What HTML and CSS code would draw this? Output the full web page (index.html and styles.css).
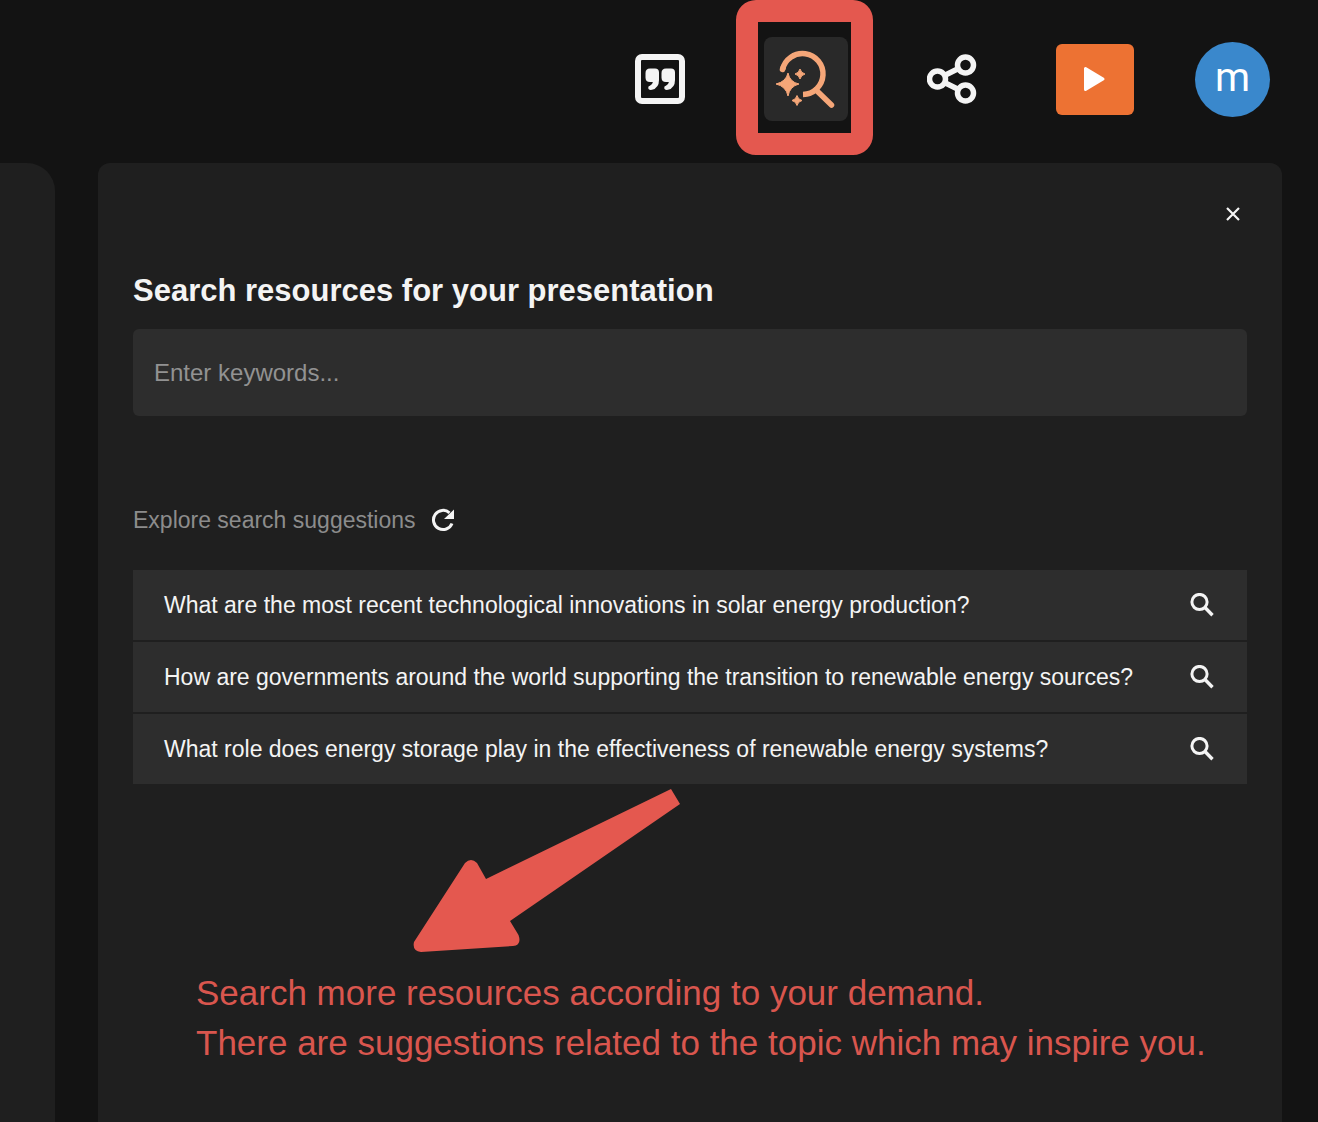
FILE: index.html
```html
<!DOCTYPE html>
<html lang="en">
<head>
<meta charset="utf-8">
<meta name="viewport" content="width=device-width, initial-scale=1">
<title>Search resources</title>
<link rel="stylesheet" href="styles.css">
</head>
<body>
<svg class="sprite" aria-hidden="true">
  <symbol id="icon-search" viewBox="0 0 24 24">
    <circle cx="9.500" cy="9" r="7.600" fill="none" stroke="currentColor" stroke-width="3"/>
    <path d="M14.500 14 22.500 22.200" fill="none" stroke="currentColor" stroke-width="3.400"/>
  </symbol>
</svg>
<header class="topbar">
  <button class="tool" type="button" aria-label="Citations">
    <svg class="tool-icon" viewBox="0 0 50 50" aria-hidden="true">
      <rect x="3" y="3" width="44" height="44" rx="4" fill="none" stroke="currentColor" stroke-width="6"/>
      <path id="quote" d="M15 14.500h5q4 0 4 4v7.500q0 8-7 9.800-3.300.6-3.800-1.500-.4-2 2-2.800 2.200-.9 2.700-3.500H15q-4.500 0-4.500-4.500v-4.500q0-4.500 4.500-4.500z" fill="currentColor"/>
      <use href="#quote" x="16"/>
    </svg>
  </button>
  <button class="tool tool-active" type="button" aria-label="Search resources">
    <svg class="spark-icon" viewBox="0 0 60 60" aria-hidden="true">
      <g fill="none" stroke="currentColor" stroke-width="5.500">
        <path d="M6.500 20.500A20.500 20.500 0 1 1 27 45.500" stroke-linecap="butt"/>
        <path d="M6.500 20.500 7.200 18.500" stroke-linecap="round"/>
        <path d="M40 41 55.500 56" stroke-linecap="round"/>
      </g>
      <g fill="currentColor" stroke="currentColor" stroke-width="1">
        <path d="M12 24q1.800 9.200 11 11-9.200 2.300-11 12-2-9.700-12-12 10-2.300 12-11z"/>
        <path d="M24 20q1 4 5 5-4 1-5 5-1-4-5-5 4-1 5-5z"/>
        <path d="M21 46.500q1 4 5 5-4 1-5 5-1-4-5-5 4-1 5-5z"/>
      </g>
    </svg>
    <span class="highlight"></span>
  </button>
  <button class="tool" type="button" aria-label="Share">
    <svg class="tool-icon" viewBox="0 0 50 50" aria-hidden="true">
      <g fill="none" stroke="currentColor" stroke-width="5.500">
        <circle cx="10.500" cy="25" r="8"/>
        <circle cx="38.500" cy="11" r="8"/>
        <circle cx="38.500" cy="39" r="8"/>
        <path d="M17.500 21.500 31.500 14.500M17.500 28.500 31.500 35.500"/>
      </g>
    </svg>
  </button>
  <button class="play" type="button" aria-label="Present">
    <svg class="play-icon" viewBox="0 0 24 26" aria-hidden="true">
      <path d="M2.500 2.500v21L20 13z" fill="currentColor" stroke="currentColor" stroke-width="3" stroke-linejoin="round"/>
    </svg>
  </button>
  <button class="avatar" type="button" aria-label="Account">m</button>
</header>
<main class="workspace">
  <div class="canvas"></div>
  <section class="panel">
    <button class="close" type="button" aria-label="Close">
      <svg class="close-icon" viewBox="0 0 14 14" aria-hidden="true"><path d="M1 1 13 13M13 1 1 13" fill="none" stroke="currentColor" stroke-width="2.200"/></svg>
    </button>
    <label class="title" for="keywords">Search resources for your presentation</label>
    <input class="field" id="keywords" type="text" placeholder="Enter keywords...">
    <div class="explore">
      <span>Explore search suggestions</span>
      <button class="refresh" type="button" aria-label="Refresh suggestions">
        <svg class="refresh-icon" viewBox="0 0 24 24" aria-hidden="true">
          <path d="M18.500 4.800A9.600 9.600 0 1 0 21 15.500" fill="none" stroke="currentColor" stroke-width="3"/>
          <path d="M23 1.500V11H13z" fill="currentColor"/>
        </svg>
      </button>
    </div>
    <div class="suggestions">
      <button class="suggestion" type="button">What are the most recent technological innovations in solar energy production?<svg class="search-icon" aria-hidden="true"><use href="#icon-search"/></svg></button>
      <button class="suggestion" type="button">How are governments around the world supporting the transition to renewable energy sources?<svg class="search-icon" aria-hidden="true"><use href="#icon-search"/></svg></button>
      <button class="suggestion" type="button">What role does energy storage play in the effectiveness of renewable energy systems?<svg class="search-icon" aria-hidden="true"><use href="#icon-search"/></svg></button>
    </div>
    <div class="note">
      <svg class="arrow" viewBox="0 0 268 164" aria-hidden="true">
        <path d="M258 0 267 15 97 132 105.500 146Q109 156 100 157L8 163Q-1 162 1 153L52 74Q58 68 64 74L73 90z" fill="currentColor"/>
      </svg>
      <p class="note-text">Search more resources according to your demand.<br>There are suggestions related to the topic which may inspire you.</p>
    </div>
  </section>
</main>
</body>
</html>
```

FILE: styles.css
```css
* {
  box-sizing: border-box;
}

body {
  margin: 0;
  min-height: 100vh;
  display: flex;
  flex-direction: column;
  background: #131313;
  color: #f4f4f4;
  font-family: "Liberation Sans", Arial, sans-serif;
}

button {
  padding: 0;
  border: 0;
  background: none;
  color: inherit;
  font: inherit;
  cursor: pointer;
}

svg {
  display: block;
}

.sprite {
  display: none;
}

.topbar {
  height: 163px;
  padding: 0 48px 5px 0;
  display: flex;
  align-items: center;
  justify-content: flex-end;
}

.tool {
  position: relative;
  margin-right: 79px;
}

.tool-icon {
  width: 50px;
  height: 50px;
}

.tool-active {
  width: 84px;
  height: 84px;
  display: grid;
  place-items: center;
  border-radius: 8px;
  background: #292929;
  color: #f5a678;
}

.spark-icon {
  width: 60px;
  height: 60px;
}

.highlight {
  position: absolute;
  inset: -37px -25px -34px -28px;
  border: 22px solid #e4584f;
  border-radius: 20px;
}

.play {
  width: 78px;
  height: 71px;
  margin-right: 61px;
  display: grid;
  place-items: center;
  border-radius: 6px;
  background: #ed7233;
  color: #fff;
}

.play-icon {
  width: 24px;
  height: 26px;
}

.avatar {
  width: 75px;
  height: 75px;
  padding-bottom: 4px;
  border-radius: 50%;
  background: #3a88cc;
  color: #fff;
  font-family: Roboto, sans-serif;
  font-size: 40px;
}

.workspace {
  flex: 1;
  display: flex;
  gap: 43px;
  padding-right: 36px;
}

.canvas {
  width: 55px;
  border-radius: 0 28px 0 0;
  background: #1f1f1f;
}

.panel {
  flex: 1;
  padding: 35px 35px 0;
  display: flex;
  flex-direction: column;
  border-radius: 12px 12px 0 0;
  background: #1f1f1f;
}

.close {
  align-self: flex-end;
  width: 28px;
  height: 32px;
  display: grid;
  place-items: center;
}

.close-icon {
  width: 14px;
  height: 14px;
}

.title {
  margin-top: 41px;
  font-size: 31px;
  font-weight: 700;
  line-height: 40px;
}

.field {
  width: 100%;
  height: 87px;
  margin-top: 18px;
  padding: 0 21px;
  border: 0;
  border-radius: 6px;
  background: #2d2d2d;
  color: inherit;
  font: inherit;
  font-size: 24px;
}

.field::placeholder {
  color: #929292;
}

.explore {
  margin-top: 89px;
  display: flex;
  align-items: center;
  gap: 15px;
  color: #8c8c8c;
  font-size: 23px;
  line-height: 30px;
}

.refresh {
  color: #f4f4f4;
}

.refresh-icon {
  width: 24px;
  height: 24px;
}

.suggestions {
  margin-top: 35px;
  display: flex;
  flex-direction: column;
  gap: 2px;
}

.suggestion {
  min-height: 70px;
  padding: 0 33px 0 31px;
  display: flex;
  align-items: center;
  justify-content: space-between;
  background: #2d2d2d;
  font-size: 23px;
  text-align: left;
}

.search-icon {
  width: 24px;
  height: 24px;
  flex: none;
}

.note {
  padding: 5px 0 0 63px;
  color: #e4584f;
}

.arrow {
  width: 268px;
  height: 164px;
  margin-left: 217px;
}

.note-text {
  margin: 15px 0 0;
  color: #d9564e;
  font-size: 35px;
  line-height: 50px;
}
```
